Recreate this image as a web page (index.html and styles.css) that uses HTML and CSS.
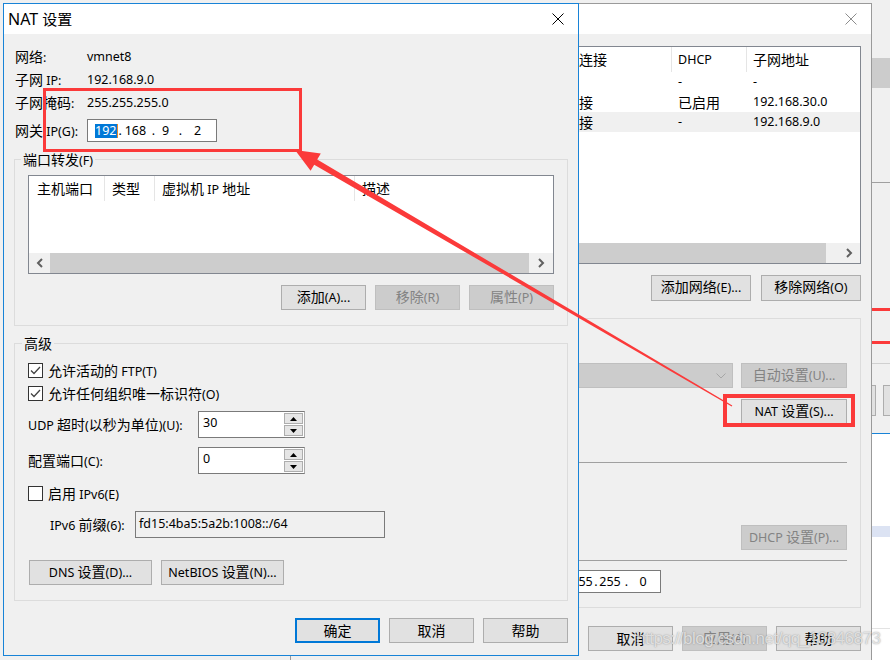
FILE: index.html
```html
<!DOCTYPE html>
<html lang="zh-CN">
<head>
    <meta charset="UTF-8">
    <meta name="viewport" content="width=device-width, initial-scale=1.0">
    <title>NAT 设置</title>
    <link rel="stylesheet" href="styles.css">
</head>
<body>
<div class="desk">

    <!-- window lying behind, only its left edge shows -->
    <div class="far">
        <div class="far-bar"></div>
        <div class="far-line"></div>
        <div class="far-red first"></div>
        <div class="far-red"></div>
        <div class="far-line light"></div>
        <div class="far-btns"><span></span><span></span></div>
        <div class="far-blue"></div>
        <div class="far-low">
            <div class="far-sel"></div>
            <div class="far-line faint"></div>
        </div>
    </div>

    <!-- 虚拟网络编辑器 -->
    <div class="win vne">
        <div class="titlebar">
            <svg class="close-x" width="12" height="12" viewBox="0 0 12 12"><path d="M0.5 0.5L11.5 11.5M11.5 0.5L0.5 11.5" stroke="#8c8c8c" stroke-width="1"/></svg>
        </div>
        <div class="vne-body">
            <div class="list vne-list">
                <div class="vrow head">
                    <span class="cn">名称</span><span class="cn">类型</span><span class="cn">外部连接</span><span class="cn">主机连接</span><span>DHCP</span><span class="cn">子网地址</span>
                </div>
                <div class="vrow">
                    <span>VMnet0</span><span class="cn">桥接模式</span><span class="cn">自动桥接</span><span>-</span><span>-</span><span>-</span>
                </div>
                <div class="vrow">
                    <span>VMnet1</span><span class="cn">仅主机</span><span>-</span><span class="cn">已连接</span><span class="cn">已启用</span><span>192.168.30.0</span>
                </div>
                <div class="vrow sel">
                    <span>VMnet8</span><span>NAT</span><span>NAT</span><span class="cn">已连接</span><span>-</span><span>192.168.9.0</span>
                </div>
                <div class="hscroll">
                    <span class="arr"><svg width="7" height="10" viewBox="0 0 7 10"><path d="M6 1L2 5L6 9" stroke="#606060" stroke-width="2" fill="none"/></svg></span>
                    <span class="thumb"></span>
                    <span class="track"></span>
                    <span class="arr"><svg width="7" height="10" viewBox="0 0 7 10"><path d="M1 1L5 5L1 9" stroke="#606060" stroke-width="2" fill="none"/></svg></span>
                </div>
            </div>

            <div class="vne-btns">
                <div class="btn"><span><span class="cn">添加网络</span>(E)...</span></div>
                <div class="btn"><span><span class="cn">移除网络</span>(O)</span></div>
            </div>

            <div class="vgroup">
                <div class="vg-row first">
                    <div class="combo"><svg width="10" height="6" viewBox="0 0 10 6"><path d="M0.5 0.5L5 5L9.5 0.5" stroke="#a6a6a6" fill="none"/></svg></div>
                    <div class="btn off"><span><span class="cn">自动设置</span>(U)...</span></div>
                </div>
                <div class="vg-row second">
                    <div class="btn"><span>NAT <span class="cn">设置</span>(S)...</span></div>
                </div>
                <div class="vg-sep"></div>
                <div class="vg-row third">
                    <div class="btn off"><span>DHCP <span class="cn">设置</span>(P)...</span></div>
                </div>
                <div class="vg-sep second"></div>
                <div class="vg-mask">
                    <span class="lbl"><span class="cn">子网掩码</span>(M):</span>
                    <div class="ipbox mask">
                        <span class="oct">255</span><span class="dot d1">.</span><span class="oct">255</span><span class="dot d2">.</span><span class="oct">255</span><span class="dot d3">.</span><span class="oct">0</span>
                    </div>
                </div>
            </div>

            <div class="vne-foot">
                <div class="btn"><span class="cn">取消</span></div>
                <div class="btn off"><span><span class="cn">应用</span>(A)</span></div>
                <div class="btn"><span class="cn">帮助</span></div>
            </div>
        </div>
    </div>

    <!-- NAT 设置 -->
    <div class="win nat">
        <div class="titlebar">
            <span class="title">NAT <span class="cn">设置</span></span>
            <svg class="close-x" width="12" height="12" viewBox="0 0 12 12"><path d="M0.5 0.5L11.5 11.5M11.5 0.5L0.5 11.5" stroke="#000" stroke-width="1"/></svg>
        </div>
        <div class="nat-body">
            <div class="info-row"><span class="lbl"><span class="cn">网络</span>:</span><span>vmnet8</span></div>
            <div class="info-row"><span class="lbl"><span class="cn">子网</span> IP:</span><span>192.168.9.0</span></div>
            <div class="info-row"><span class="lbl"><span class="cn">子网掩码</span>:</span><span>255.255.255.0</span></div>
            <div class="info-row gw">
                <span class="lbl"><span class="cn">网关</span> IP(G):</span>
                <div class="ipbox gw-box">
                    <span class="sel">192</span><span class="g-dot1">.</span><span class="g-oct2">168</span><span class="g-dot">.</span><span class="g-oct3">9</span><span class="g-dot wide">.</span><span class="g-oct4">2</span>
                </div>
            </div>

            <fieldset class="group pf">
                <legend><span class="cn">端口转发</span>(F)</legend>
                <div class="list pf-list">
                    <div class="list-head">
                        <span class="c1 cn">主机端口</span>
                        <span class="c2 cn">类型</span>
                        <span class="c3"><span class="cn">虚拟机</span> IP <span class="cn">地址</span></span>
                        <span class="c4 cn">描述</span>
                    </div>
                    <div class="hscroll">
                        <span class="arr"><svg width="7" height="10" viewBox="0 0 7 10"><path d="M6 1L2 5L6 9" stroke="#606060" stroke-width="2" fill="none"/></svg></span>
                        <span class="thumb"></span>
                        <span class="arr r"><svg width="7" height="10" viewBox="0 0 7 10"><path d="M1 1L5 5L1 9" stroke="#606060" stroke-width="2" fill="none"/></svg></span>
                    </div>
                </div>
                <div class="pf-btns">
                    <div class="btn"><span><span class="cn">添加</span>(A)...</span></div>
                    <div class="btn off"><span><span class="cn">移除</span>(R)</span></div>
                    <div class="btn off"><span><span class="cn">属性</span>(P)</span></div>
                </div>
            </fieldset>

            <fieldset class="group adv">
                <legend><span class="cn">高级</span></legend>
                <div class="adv-in">
                    <div class="chk first">
                        <span class="box"><svg width="13" height="13" viewBox="0 0 13 13"><path d="M2 6.5L5 9.5L11 3" stroke="#444" stroke-width="1.3" fill="none"/></svg></span>
                        <span><span class="cn">允许活动的</span> FTP(T)</span>
                    </div>
                    <div class="chk">
                        <span class="box"><svg width="13" height="13" viewBox="0 0 13 13"><path d="M2 6.5L5 9.5L11 3" stroke="#444" stroke-width="1.3" fill="none"/></svg></span>
                        <span><span class="cn">允许任何组织唯一标识符</span>(O)</span>
                    </div>
                    <div class="spin-row">
                        <span class="lbl">UDP <span class="cn">超时</span>(<span class="cn">以秒为单位</span>)(U):</span>
                        <div class="spin">
                            <span class="val">30</span>
                            <span class="ud">
                                <span><svg width="7" height="4" viewBox="0 0 7 4"><path d="M0 4L3.5 0L7 4Z" fill="#000"/></svg></span>
                                <span><svg width="7" height="4" viewBox="0 0 7 4"><path d="M0 0L3.5 4L7 0Z" fill="#000"/></svg></span>
                            </span>
                        </div>
                    </div>
                    <div class="spin-row port">
                        <span class="lbl"><span class="cn">配置端口</span>(C):</span>
                        <div class="spin">
                            <span class="val">0</span>
                            <span class="ud">
                                <span><svg width="7" height="4" viewBox="0 0 7 4"><path d="M0 4L3.5 0L7 4Z" fill="#000"/></svg></span>
                                <span><svg width="7" height="4" viewBox="0 0 7 4"><path d="M0 0L3.5 4L7 0Z" fill="#000"/></svg></span>
                            </span>
                        </div>
                    </div>
                    <div class="chk v6">
                        <span class="box"></span>
                        <span><span class="cn">启用</span> IPv6(E)</span>
                    </div>
                    <div class="v6-row">
                        <span class="lbl">IPv6 <span class="cn">前缀</span>(6):</span>
                        <div class="v6-field">fd15:4ba5:5a2b:1008::/64</div>
                    </div>
                    <div class="adv-btns">
                        <div class="btn"><span>DNS <span class="cn">设置</span>(D)...</span></div>
                        <div class="btn"><span>NetBIOS <span class="cn">设置</span>(N)...</span></div>
                    </div>
                </div>
            </fieldset>

            <div class="nat-foot">
                <div class="btn default"><span class="cn">确定</span></div>
                <div class="btn"><span class="cn">取消</span></div>
                <div class="btn"><span class="cn">帮助</span></div>
            </div>
        </div>
    </div>

    <!-- red markup drawn on top of the screenshot -->
    <div class="mark mark-gw"></div>
    <div class="mark mark-nat"></div>
    <svg class="arrow" width="890" height="660" viewBox="0 0 890 660">
        <polygon points="295,150 320.8,153.5 317.2,159.5 732.3,405.6 731.7,406.4 314.2,164.7 310.6,170.7" fill="#fb3a3a"/>
    </svg>
    <div class="watermark">https://blog.csdn.net/qq_13846873</div>
</div>
</body>
</html>
```

FILE: styles.css
```css
* {
    box-sizing: border-box;
}
body {
    margin: 0;
    font-family: "Noto Sans", "Noto Sans CJK SC", sans-serif;
    font-size: 12.5px;
    line-height: 18px;
    color: #000;
}
.cn {
    font-family: "Noto Sans CJK SC", sans-serif;
    font-size: 14px;
}
.desk {
    position: relative;
    width: 890px;
    height: 660px;
    overflow: hidden;
    background: #f0f0f0;
}

/* common window parts */
.win {
    position: absolute;
    background: #f0f0f0;
}
.titlebar {
    height: 30px;
    background: #fff;
    display: flex;
    align-items: center;
    justify-content: space-between;
}
.close-x {
    display: block;
}
.btn {
    width: 85px;
    height: 25px;
    padding-bottom: 2px;
    background: #e1e1e1;
    border: 1px solid #adadad;
    display: flex;
    align-items: center;
    justify-content: center;
    white-space: nowrap;
}
.btn.off {
    background: #cccccc;
    border-color: #bfbfbf;
    color: #838383;
}
.btn.default {
    border: 2px solid #0078d7;
}
.list {
    background: #fff;
    border: 1px solid #828790;
    display: flex;
    flex-direction: column;
}
.hscroll {
    margin-top: auto;
    height: 20px;
    flex: none;
    display: flex;
    background: #f0f0f0;
}
.hscroll .arr {
    width: 21px;
    display: flex;
    align-items: center;
    justify-content: center;
}
.hscroll .arr.r {
    width: 24px;
}
.hscroll .thumb {
    flex: 1;
    background: #cdcdcd;
}
.hscroll .track {
    width: 13px;
}
.ipbox {
    height: 23px;
    background: #fff;
    border: 1px solid #7a7a7a;
    display: flex;
    align-items: center;
    white-space: nowrap;
}

/* far window */
.far {
    position: absolute;
    left: 872px;
    top: 0;
    width: 18px;
    height: 660px;
    background: #f0f0f0;
    display: flex;
    flex-direction: column;
}
.far-bar {
    margin-top: 58px;
    height: 30px;
    background: #cccccc;
}
.far-line {
    margin-top: 94px;
    height: 1px;
    background: #a0a0a0;
}
.far-red {
    margin-top: 30px;
    height: 3px;
    background: #fb3a3a;
}
.far-red.first {
    margin-top: 125px;
}
.far-line.light {
    margin-top: 19px;
    background: #d0d0d0;
}
.far-btns {
    margin-top: 21px;
    height: 31px;
    display: flex;
    gap: 7px;
}
.far-btns span {
    width: 5px;
    background: #e1e1e1;
    border: 1px solid #adadad;
    border-left: none;
}
.far-btns span + span {
    width: 8px;
    border-left: 1px solid #adadad;
    border-right: none;
}
.far-blue {
    margin-top: 17px;
    height: 1px;
    background: #1883d7;
}
.far-low {
    flex: 1;
    background: #fff;
    display: flex;
    flex-direction: column;
}
.far-sel {
    margin-top: 92px;
    height: 11px;
    background: #dce3f3;
}
.far-line.faint {
    margin-top: 91px;
    background: #e3e3e3;
}

/* virtual network editor */
.vne {
    left: 290px;
    top: 3px;
    width: 582px;
    height: 680px;
    border: 1px solid #9a9a9a;
}
.vne .titlebar {
    justify-content: flex-end;
    padding-right: 14px;
}
.vne-body {
    padding: 12px 10px 0 11px;
}
.vne-list {
    height: 218px;
}
.vrow {
    display: grid;
    grid-template-columns: 77px 70px 95px 127px 75px 1fr;
    height: 20px;
    align-items: center;
    flex: none;
}
.vrow > span {
    padding-left: 6px;
    white-space: nowrap;
}
.vrow.head {
    height: 25px;
}
.vrow.head > span {
    height: 100%;
    line-height: 25px;
    border-right: 1px solid #e5e5e5;
}
.vrow.head > span:last-child {
    border-right: none;
}
.vrow.sel {
    background: #f0f0f0;
}
.vne-btns {
    display: flex;
    justify-content: flex-end;
    gap: 10px;
    margin-top: 11px;
}
.vne-btns .btn {
    width: 100px;
    height: 26px;
}
.vgroup {
    margin-top: 17px;
    border: 1px solid #dcdcdc;
    padding: 0 13px 14px 0;
}
.vgroup .btn {
    width: 106px;
}
.vg-row {
    display: flex;
    justify-content: flex-end;
    gap: 8px;
}
.vg-row.first {
    margin-top: 44px;
}
.vg-row.second {
    margin-top: 11px;
}
.vg-row.third {
    margin-top: 62px;
}
.combo {
    width: 300px;
    height: 25px;
    background: #cccccc;
    border: 1px solid #bfbfbf;
    display: flex;
    justify-content: flex-end;
    align-items: center;
    padding-right: 6px;
}
.vg-sep {
    margin-top: 38px;
    height: 1px;
    background: #a0a0a0;
}
.vg-sep.second {
    margin-top: 10px;
}
.vg-mask {
    display: flex;
    align-items: center;
    margin-top: 9px;
}
.vg-mask .lbl {
    width: 228px;
    text-align: right;
    padding-right: 8px;
}
.ipbox.mask {
    width: 130px;
    padding-left: 8px;
}
.ipbox.mask .oct {
    width: 24px;
    text-align: center;
}
.ipbox.mask .dot {
    text-align: center;
}
.ipbox.mask .d1 {
    width: 6px;
}
.ipbox.mask .d2 {
    width: 4px;
}
.ipbox.mask .d3 {
    width: 9px;
}
.vne-foot {
    display: flex;
    justify-content: flex-end;
    gap: 9px;
    margin-top: 18px;
}

/* NAT dialog */
.nat {
    left: 3px;
    top: 3px;
    width: 576px;
    height: 653px;
    border: 1px solid #1883d7;
}
.nat .titlebar {
    padding: 0 14px 0 4px;
}
.nat .title {
    font-size: 16px;
}
.nat .title .cn {
    font-size: 15px;
}
.nat-body {
    padding: 11px 10px 0;
}
.info-row {
    display: flex;
    align-items: center;
    height: 23px;
    margin-left: 1px;
}
.info-row .lbl {
    width: 72px;
}
.info-row.gw {
    margin-top: 5px;
}
.gw-box {
    width: 130px;
    padding-left: 7px;
}
.gw-box .sel {
    background: #0078d7;
    color: #fff;
    padding: 0 1px 0 0;
    line-height: 14px;
    border-right: 1px solid #e88a2a;
}
.gw-box .g-dot1 {
    width: 5px;
}
.gw-box .g-oct2 {
    width: 24px;
    text-align: center;
}
.gw-box .g-dot {
    width: 12px;
    text-align: center;
}
.gw-box .g-dot.wide {
    width: 18px;
}
.gw-box .g-oct3 {
    width: 12px;
    text-align: center;
}
.gw-box .g-oct4 {
    width: 16px;
    text-align: center;
}

.group {
    margin: 0;
    padding: 0 0 15px;
    min-width: 0;
    border: 1px solid #dcdcdc;
}
.group legend {
    padding: 0 2px;
    height: 18px;
    line-height: 18px;
}
.pf {
    margin-top: 8px;
}
.pf legend {
    margin-left: 6px;
}
.pf-list {
    margin: 7px 13px 0;
    height: 99px;
}
.list-head {
    display: flex;
    height: 25px;
    flex: none;
}
.list-head > span {
    padding-left: 7px;
    line-height: 25px;
    white-space: nowrap;
    border-right: 1px solid #e5e5e5;
}
.list-head .c1 {
    width: 76px;
    padding-left: 8px;
}
.list-head .c2 {
    width: 50px;
}
.list-head .c3 {
    width: 200px;
}
.list-head .c4 {
    flex: 1;
    border-right: none;
}
.pf-btns {
    display: flex;
    justify-content: flex-end;
    gap: 9px;
    margin: 11px 13px 0;
}

.adv {
    margin-top: 8px;
}
.adv legend {
    margin-left: 7px;
}
.adv-in {
    padding-left: 13px;
}
.chk {
    display: flex;
    align-items: center;
    gap: 5px;
    height: 23px;
}
.chk.first {
    margin-top: 7px;
}
.chk.v6 {
    margin-top: 8px;
}
.box {
    width: 15px;
    height: 15px;
    border: 1px solid #333;
    background: #fff;
    display: flex;
    align-items: center;
    justify-content: center;
}
.spin-row {
    display: flex;
    align-items: center;
    height: 27px;
    margin-top: 6px;
}
.spin-row.port {
    margin-top: 9px;
}
.spin-row .lbl {
    width: 170px;
    white-space: nowrap;
}
.spin {
    width: 107px;
    height: 27px;
    display: flex;
    background: #fff;
    border: 1px solid #7a7a7a;
    border-right-color: #adadad;
}
.spin .val {
    flex: 1;
    padding: 2px 0 0 4px;
    line-height: 18px;
}
.spin .ud {
    width: 20px;
    display: flex;
    flex-direction: column;
    padding: 1px 1px 1px 0;
    gap: 1px;
}
.spin .ud span {
    flex: 1;
    background: #e5e5e5;
    border: 1px solid #adadad;
    display: flex;
    align-items: center;
    justify-content: center;
}
.v6-row {
    display: flex;
    align-items: center;
    height: 27px;
    margin-top: 6px;
    padding-left: 22px;
}
.v6-row .lbl {
    width: 85px;
    white-space: nowrap;
}
.v6-field {
    width: 250px;
    height: 27px;
    border: 1px solid #7a7a7a;
    background: #f0f0f0;
    padding-left: 3px;
    line-height: 23px;
}
.adv-btns {
    display: flex;
    gap: 9px;
    margin: 22px 0 0 1px;
}
.adv-btns .btn {
    width: 123px;
}
.nat-foot {
    display: flex;
    justify-content: flex-end;
    gap: 9px;
    margin-top: 17px;
}

/* markup on top */
.mark {
    position: absolute;
    border: 3px solid #fb3a3a;
}
.mark-gw {
    left: 43px;
    top: 88px;
    width: 259px;
    height: 64px;
}
.mark-nat {
    left: 723px;
    top: 394px;
    width: 132px;
    height: 33px;
    border-width: 4px;
}
.arrow {
    position: absolute;
    left: 0;
    top: 0;
    pointer-events: none;
}
.watermark {
    position: absolute;
    left: 636px;
    top: 630px;
    font-family: "Liberation Sans", Arial, sans-serif;
    font-size: 17px;
    letter-spacing: -0.5px;
    color: rgba(240, 240, 240, 0.8);
    text-shadow: 0 0 1.5px rgba(80, 80, 80, 0.6);
    white-space: nowrap;
}
```
